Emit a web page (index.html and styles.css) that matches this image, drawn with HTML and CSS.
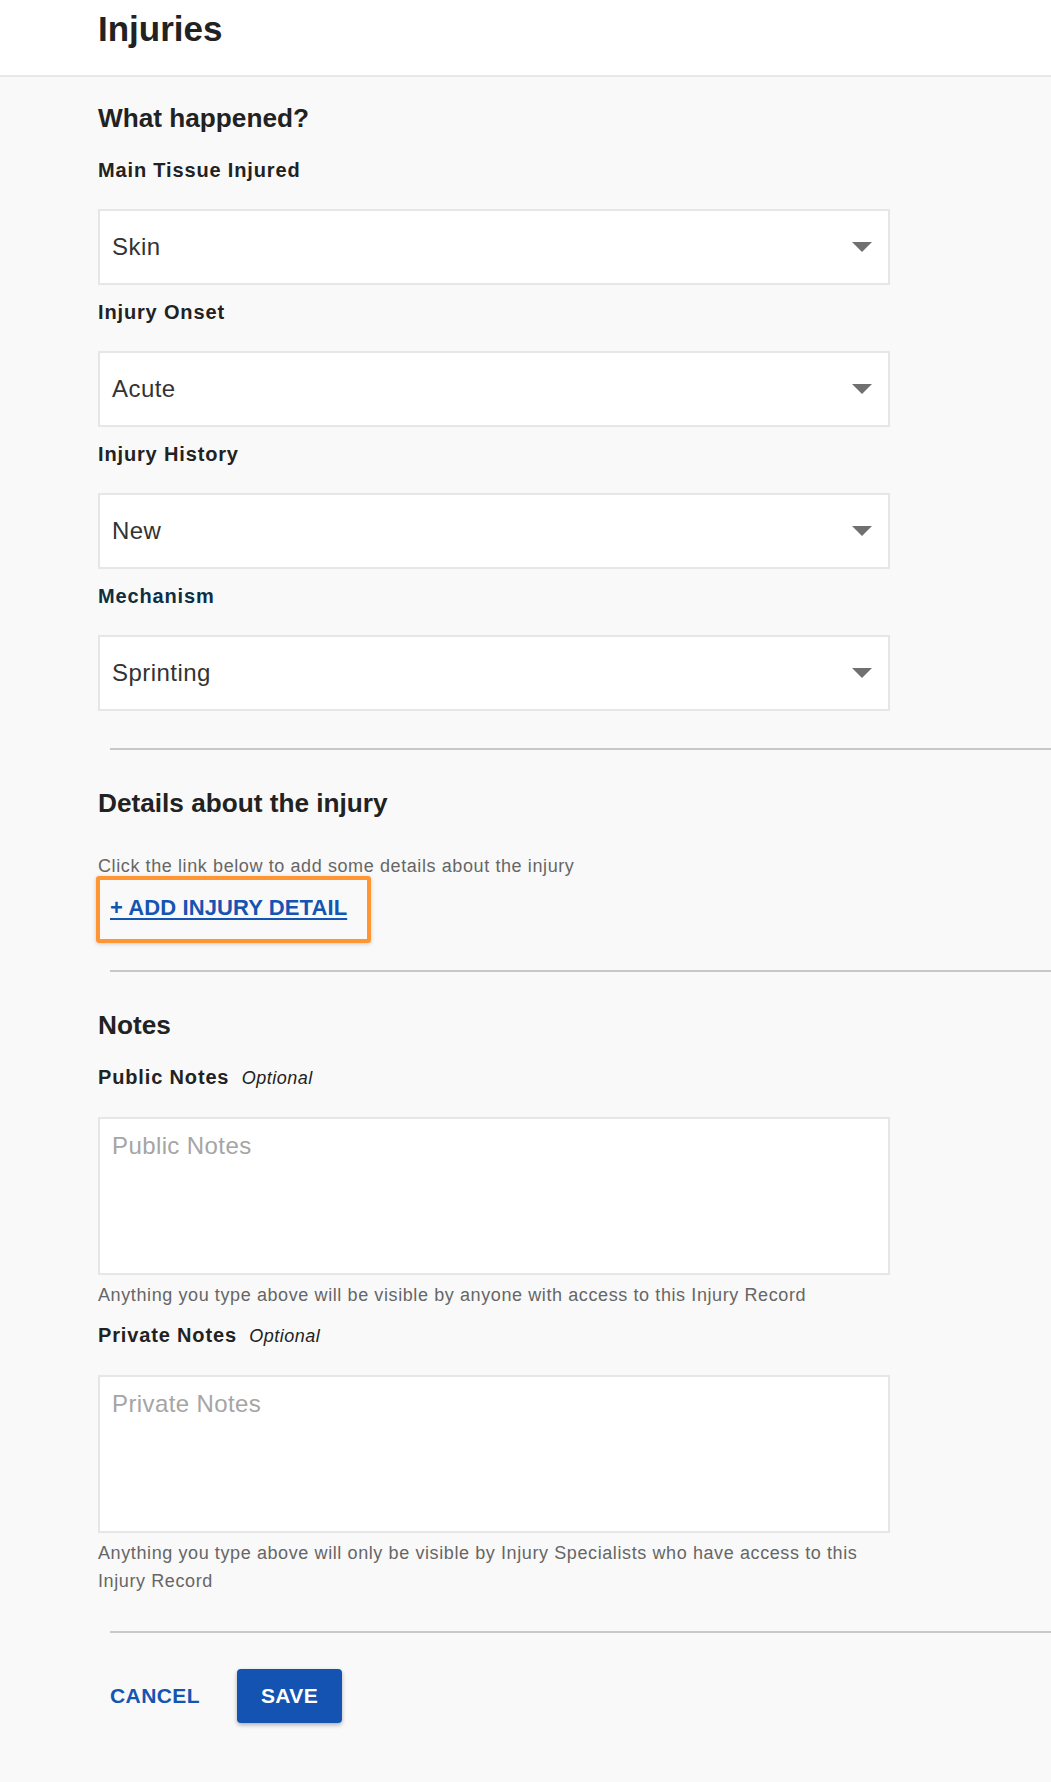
FILE: index.html
```html
<html>
    <head>
    <meta name="viewport" content="width=device-width, initial-scale=1"/>
    <title>Injuries</title>
    <link rel="stylesheet" href="styles.css">
    </head>
    <body>
        <div class="top-bar">
            <h1 class="page-title">Injuries</h1>
        </div>
        <div class="page">
            <h2 class="section-title">What happened?</h2>

            <div class="field first">
                <div class="field-label">Main Tissue Injured</div>
                <div class="select"><span class="select-value">Skin</span><span class="caret"></span></div>
            </div>
            <div class="field">
                <div class="field-label">Injury Onset</div>
                <div class="select"><span class="select-value">Acute</span><span class="caret"></span></div>
            </div>
            <div class="field">
                <div class="field-label">Injury History</div>
                <div class="select"><span class="select-value">New</span><span class="caret"></span></div>
            </div>
            <div class="field">
                <div class="field-label active">Mechanism</div>
                <div class="select"><span class="select-value">Sprinting</span><span class="caret"></span></div>
            </div>

            <hr class="divider after-fields">

            <h2 class="section-title spaced">Details about the injury</h2>
            <p class="hint">Click the link below to add some details about the injury</p>
            <div class="link-box"><a href="#" class="add-link">+ ADD INJURY DETAIL</a></div>

            <hr class="divider after-link">

            <h2 class="section-title spaced">Notes</h2>
            <div class="field first">
                <div class="field-label">Public Notes <span class="optional">Optional</span></div>
                <textarea class="notes" placeholder="Public Notes"></textarea>
                <div class="helper">Anything you type above will be visible by anyone with access to this Injury Record</div>
            </div>
            <div class="field notes-field">
                <div class="field-label">Private Notes <span class="optional">Optional</span></div>
                <textarea class="notes" placeholder="Private Notes"></textarea>
                <div class="helper">Anything you type above will only be visible by Injury Specialists who have access to this Injury Record</div>
            </div>

            <hr class="divider after-notes">

            <div class="actions">
                <button type="button" class="btn-text">CANCEL</button>
                <button type="button" class="btn-save">SAVE</button>
            </div>
        </div>
    </body>
</html>
```

FILE: styles.css
```css
body{
    margin:0;
    background-color:#f9f9f9;
    font-family:"Liberation Sans", Arial, sans-serif;
    color:#222;
}
.top-bar{
    box-sizing:border-box;
    height:77px;
    padding:9px 0 0 98px;
    background-color:#fff;
    border-bottom:2px solid #e8e8e8;
}
.page-title{
    margin:0;
    font-size:35px;
    line-height:40px;
    font-weight:700;
    color:#222;
}
.page{
    padding:26px 0 59px 98px;
}
.section-title{
    margin:0;
    font-size:26.2px;
    line-height:30px;
    font-weight:700;
    color:#222;
}
.section-title.spaced{
    margin-top:38px;
}
.field{
    max-width:792px;
    margin-top:15px;
}
.field.first{
    margin-top:25px;
}
.field.notes-field{
    margin-top:14px;
}
.field-label{
    font-size:20px;
    line-height:24px;
    font-weight:700;
    letter-spacing:.85px;
    color:#222;
}
.field-label.active{
    color:#0c2f45;
}
.optional{
    margin-left:6px;
    font-size:18px;
    font-weight:400;
    font-style:italic;
    letter-spacing:.5px;
}
.select{
    box-sizing:border-box;
    display:flex;
    align-items:center;
    justify-content:space-between;
    height:76px;
    margin-top:27px;
    padding:0 16px 0 12px;
    background-color:#fff;
    border:2px solid #e6e6e6;
}
.select-value{
    font-size:24px;
    letter-spacing:.45px;
    color:#333;
}
.caret{
    width:0;
    height:0;
    border-left:10px solid transparent;
    border-right:10px solid transparent;
    border-top:10px solid #707070;
}
.notes{
    display:block;
    box-sizing:border-box;
    width:100%;
    height:158px;
    margin:27px 0 0 0;
    padding:13px 12px;
    background-color:#fff;
    border:2px solid #e6e6e6;
    border-radius:0;
    font-family:"Liberation Sans", Arial, sans-serif;
    font-size:24px;
    line-height:28px;
    letter-spacing:.4px;
    color:#333;
    resize:none;
    outline:none;
}
.notes::placeholder{
    color:#a5a5a5;
}
.helper{
    margin-top:6px;
    font-size:18px;
    line-height:28px;
    letter-spacing:.6px;
    color:#666;
}
.divider{
    height:2px;
    margin:0 0 0 12px;
    border:0;
    background-color:#c8c8c8;
}
.divider.after-fields{
    margin-top:37px;
}
.divider.after-notes{
    margin-top:36px;
}
.divider.after-link{
    margin-top:27px;
}
.hint{
    margin:38px 0 0 0;
    font-size:18px;
    line-height:20px;
    letter-spacing:.6px;
    color:#666;
}
.link-box{
    display:inline-block;
    margin-left:-2px;
    padding:15px 20px 18px 10px;
    border:4px solid #ff9533;
    border-radius:3px;
    box-shadow:0 1px 4px rgba(0,0,0,.18);
}
.add-link{
    display:block;
    font-size:22px;
    line-height:26px;
    font-weight:700;
    letter-spacing:.1px;
    color:#1454b3;
    text-decoration:underline;
    text-decoration-thickness:2px;
    text-underline-offset:3px;
}
.actions{
    display:flex;
    align-items:center;
    gap:25px;
    margin-top:36px;
}
.btn-text{
    padding:0 12px;
    border:0;
    background:none;
    font-family:"Liberation Sans", Arial, sans-serif;
    font-size:21px;
    font-weight:700;
    letter-spacing:.4px;
    color:#1454b3;
}
.btn-save{
    height:54px;
    padding:0 24px;
    border:0;
    border-radius:4px;
    background-color:#1453b1;
    box-shadow:0 2px 4px rgba(0,0,0,.3);
    font-family:"Liberation Sans", Arial, sans-serif;
    font-size:21px;
    font-weight:700;
    letter-spacing:.4px;
    color:#fff;
}
```
